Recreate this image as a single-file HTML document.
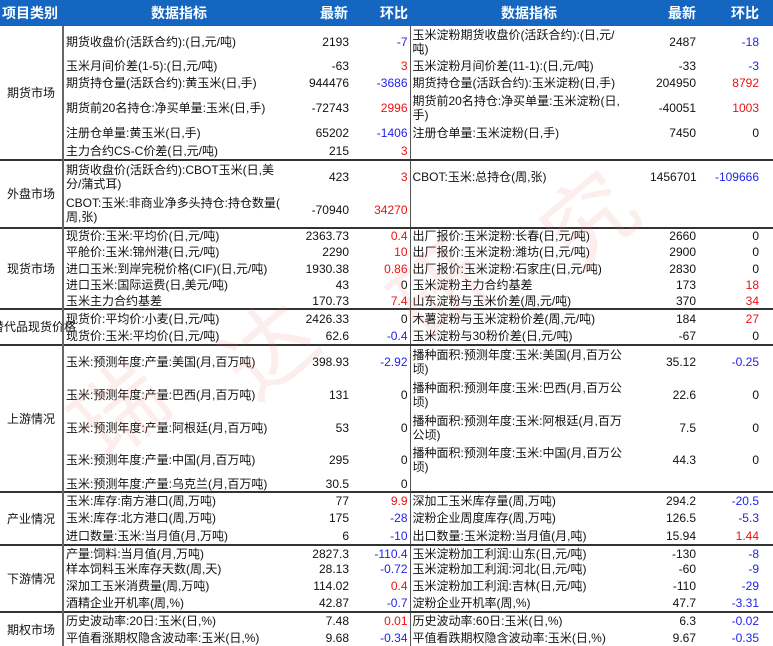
<!DOCTYPE html>
<html><head><meta charset="utf-8"><style>
html,body{margin:0;padding:0;background:#fff;}
body{width:773px;height:646px;overflow:hidden;position:relative;font-family:"Liberation Sans","Noto Sans CJK SC",sans-serif;font-size:12px;color:#111;}
table{border-collapse:collapse;table-layout:fixed;width:773px;}
td{padding:0 2px;line-height:14px;vertical-align:middle;white-space:nowrap;overflow:hidden;}
thead td{background:#1466c0;color:#fff;font-weight:bold;font-size:14px;height:26px;text-align:center;}
td.c{text-align:center;border-right:2px solid #666;white-space:nowrap;overflow:visible;}
td.n{text-align:right;padding-right:1px;}
td.h{text-align:right;padding-right:2px;border-right:1.5px solid #555;}
td.l{padding-right:10px;}
td.r{text-align:right;padding-right:14px;}
tr.s td{border-top:2px solid #333;}
.b{color:#2222ee}.d{color:#ee1111}
.wm{position:absolute;color:rgba(240,120,120,0.13);font-size:90px;transform:rotate(-40deg);pointer-events:none;}
</style></head><body>
<table>
<colgroup><col style="width:63px"><col style="width:232px"><col style="width:55px"><col style="width:60px"><col style="width:238px"><col style="width:58px"><col style="width:67px"></colgroup>
<thead><tr><td style="text-align:left;padding-left:2px">项目类别</td><td>数据指标</td><td style="text-align:right">最新</td><td style="text-align:right">环比</td><td>数据指标</td><td style="text-align:right;padding-right:10px">最新</td><td style="text-align:right;padding-right:14px">环比</td></tr></thead>
<tbody>
<tr style="height:31px"><td class="c" rowspan="6">期货市场</td><td>期货收盘价(活跃合约):(日,元/吨)</td><td class="n">2193</td><td class="h b">-7</td><td>玉米淀粉期货收盘价(活跃合约):(日,元/<br>吨)</td><td class="n l">2487</td><td class="r b">-18</td></tr>
<tr style="height:17px"><td>玉米月间价差(1-5):(日,元/吨)</td><td class="n">-63</td><td class="h d">3</td><td>玉米淀粉月间价差(11-1):(日,元/吨)</td><td class="n l">-33</td><td class="r b">-3</td></tr>
<tr style="height:17px"><td>期货持仓量(活跃合约):黄玉米(日,手)</td><td class="n">944476</td><td class="h b">-3686</td><td>期货持仓量(活跃合约):玉米淀粉(日,手)</td><td class="n l">204950</td><td class="r d">8792</td></tr>
<tr style="height:33px"><td>期货前20名持仓:净买单量:玉米(日,手)</td><td class="n">-72743</td><td class="h d">2996</td><td>期货前20名持仓:净买单量:玉米淀粉(日,<br>手)</td><td class="n l">-40051</td><td class="r d">1003</td></tr>
<tr style="height:18px"><td>注册仓单量:黄玉米(日,手)</td><td class="n">65202</td><td class="h b">-1406</td><td>注册仓单量:玉米淀粉(日,手)</td><td class="n l">7450</td><td class="r">0</td></tr>
<tr style="height:18px"><td>主力合约CS-C价差(日,元/吨)</td><td class="n">215</td><td class="h d">3</td><td></td><td class="n l"></td><td class="r"></td></tr>
<tr class="s" style="height:33px"><td class="c" rowspan="2">外盘市场</td><td>期货收盘价(活跃合约):CBOT玉米(日,美<br>分/蒲式耳)</td><td class="n">423</td><td class="h d">3</td><td>CBOT:玉米:总持仓(周,张)</td><td class="n l">1456701</td><td class="r b">-109666</td></tr>
<tr style="height:35px"><td>CBOT:玉米:非商业净多头持仓:持仓数量(<br>周,张)</td><td class="n">-70940</td><td class="h d">34270</td><td></td><td class="n l"></td><td class="r"></td></tr>
<tr class="s" style="height:15px"><td class="c" rowspan="5">现货市场</td><td>现货价:玉米:平均价(日,元/吨)</td><td class="n">2363.73</td><td class="h d">0.4</td><td>出厂报价:玉米淀粉:长春(日,元/吨)</td><td class="n l">2660</td><td class="r">0</td></tr>
<tr style="height:17px"><td>平舱价:玉米:锦州港(日,元/吨)</td><td class="n">2290</td><td class="h d">10</td><td>出厂报价:玉米淀粉:潍坊(日,元/吨)</td><td class="n l">2900</td><td class="r">0</td></tr>
<tr style="height:17px"><td>进口玉米:到岸完税价格(CIF)(日,元/吨)</td><td class="n">1930.38</td><td class="h d">0.86</td><td>出厂报价:玉米淀粉:石家庄(日,元/吨)</td><td class="n l">2830</td><td class="r">0</td></tr>
<tr style="height:16px"><td>进口玉米:国际运费(日,美元/吨)</td><td class="n">43</td><td class="h">0</td><td>玉米淀粉主力合约基差</td><td class="n l">173</td><td class="r d">18</td></tr>
<tr style="height:16px"><td>玉米主力合约基差</td><td class="n">170.73</td><td class="h d">7.4</td><td>山东淀粉与玉米价差(周,元/吨)</td><td class="n l">370</td><td class="r d">34</td></tr>
<tr class="s" style="height:18px"><td class="c" rowspan="2" style="text-align:right;padding-right:0"><span style="margin-left:-10px">替代品现货价格</span></td><td>现货价:平均价:小麦(日,元/吨)</td><td class="n">2426.33</td><td class="h">0</td><td>木薯淀粉与玉米淀粉价差(周,元/吨)</td><td class="n l">184</td><td class="r d">27</td></tr>
<tr style="height:18px"><td>现货价:玉米:平均价(日,元/吨)</td><td class="n">62.6</td><td class="h b">-0.4</td><td>玉米淀粉与30粉价差(日,元/吨)</td><td class="n l">-67</td><td class="r">0</td></tr>
<tr class="s" style="height:33px"><td class="c" rowspan="5">上游情况</td><td>玉米:预测年度:产量:美国(月,百万吨)</td><td class="n">398.93</td><td class="h b">-2.92</td><td>播种面积:预测年度:玉米:美国(月,百万公<br>顷)</td><td class="n l">35.12</td><td class="r b">-0.25</td></tr>
<tr style="height:33px"><td>玉米:预测年度:产量:巴西(月,百万吨)</td><td class="n">131</td><td class="h">0</td><td>播种面积:预测年度:玉米:巴西(月,百万公<br>顷)</td><td class="n l">22.6</td><td class="r">0</td></tr>
<tr style="height:33px"><td>玉米:预测年度:产量:阿根廷(月,百万吨)</td><td class="n">53</td><td class="h">0</td><td>播种面积:预测年度:玉米:阿根廷(月,百万<br>公顷)</td><td class="n l">7.5</td><td class="r">0</td></tr>
<tr style="height:32px"><td>玉米:预测年度:产量:中国(月,百万吨)</td><td class="n">295</td><td class="h">0</td><td>播种面积:预测年度:玉米:中国(月,百万公<br>顷)</td><td class="n l">44.3</td><td class="r">0</td></tr>
<tr style="height:16px"><td>玉米:预测年度:产量:乌克兰(月,百万吨)</td><td class="n">30.5</td><td class="h">0</td><td></td><td class="n l"></td><td class="r"></td></tr>
<tr class="s" style="height:17px"><td class="c" rowspan="3">产业情况</td><td>玉米:库存:南方港口(周,万吨)</td><td class="n">77</td><td class="h d">9.9</td><td>深加工玉米库存量(周,万吨)</td><td class="n l">294.2</td><td class="r b">-20.5</td></tr>
<tr style="height:18px"><td>玉米:库存:北方港口(周,万吨)</td><td class="n">175</td><td class="h b">-28</td><td>淀粉企业周度库存(周,万吨)</td><td class="n l">126.5</td><td class="r b">-5.3</td></tr>
<tr style="height:18px"><td>进口数量:玉米:当月值(月,万吨)</td><td class="n">6</td><td class="h b">-10</td><td>出口数量:玉米淀粉:当月值(月,吨)</td><td class="n l">15.94</td><td class="r d">1.44</td></tr>
<tr class="s" style="height:16px"><td class="c" rowspan="4">下游情况</td><td>产量:饲料:当月值(月,万吨)</td><td class="n">2827.3</td><td class="h b">-110.4</td><td>玉米淀粉加工利润:山东(日,元/吨)</td><td class="n l">-130</td><td class="r b">-8</td></tr>
<tr style="height:16px"><td>样本饲料玉米库存天数(周,天)</td><td class="n">28.13</td><td class="h b">-0.72</td><td>玉米淀粉加工利润:河北(日,元/吨)</td><td class="n l">-60</td><td class="r b">-9</td></tr>
<tr style="height:17px"><td>深加工玉米消费量(周,万吨)</td><td class="n">114.02</td><td class="h d">0.4</td><td>玉米淀粉加工利润:吉林(日,元/吨)</td><td class="n l">-110</td><td class="r b">-29</td></tr>
<tr style="height:18px"><td>酒精企业开机率(周,%)</td><td class="n">42.87</td><td class="h b">-0.7</td><td>淀粉企业开机率(周,%)</td><td class="n l">47.7</td><td class="r b">-3.31</td></tr>
<tr class="s" style="height:17px"><td class="c" rowspan="2">期权市场</td><td>历史波动率:20日:玉米(日,%)</td><td class="n">7.48</td><td class="h d">0.01</td><td>历史波动率:60日:玉米(日,%)</td><td class="n l">6.3</td><td class="r b">-0.02</td></tr>
<tr style="height:17px"><td>平值看涨期权隐含波动率:玉米(日,%)</td><td class="n">9.68</td><td class="h b">-0.34</td><td>平值看跌期权隐含波动率:玉米(日,%)</td><td class="n l">9.67</td><td class="r b">-0.35</td></tr>
</tbody></table>
<div class="wm" style="left:70px;top:340px;">瑞</div>
<div class="wm" style="left:220px;top:280px;">达</div>
<div class="wm" style="left:390px;top:220px;">研</div>
<div class="wm" style="left:540px;top:150px;">究</div>
</body></html>
